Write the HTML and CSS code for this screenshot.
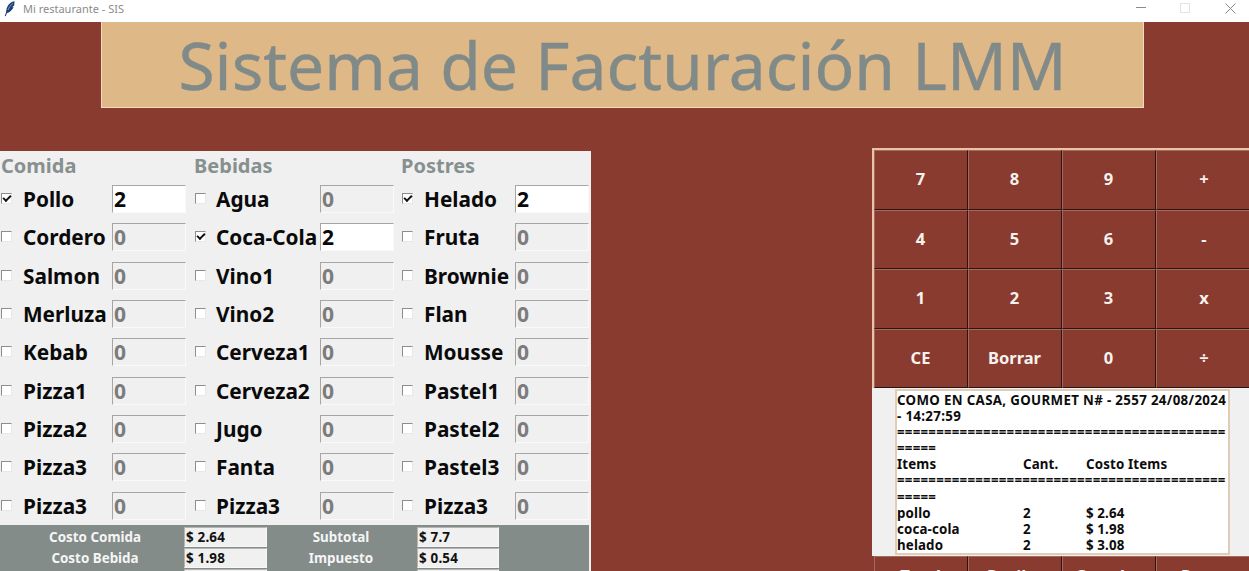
FILE: index.html
```html
<!DOCTYPE html>
<html lang="es">
<head>
<meta charset="utf-8">
<title>Mi restaurante - SIS</title>
<link rel="stylesheet" href="styles.css">
</head>
<body>
<header class="titlebar">
  <svg class="feather" viewBox="0 0 12 16" width="12" height="16"><path d="M10.500 .3C7 .8 3.500 3.500 2.400 8.500L2 11.500 .8 15 1.700 15.300 3 12C6 11.500 8.500 8.500 9.600 6L8 6.200 10.200 4.500Z" fill="#1c3f73"/><path d="M9 2.500C6.500 4 5 6.500 4 9" stroke="#7f9fca" fill="none"/></svg>
  <span class="app-name">Mi restaurante - SIS</span>
  <div class="win-controls">
    <svg width="149" height="22" viewBox="0 0 149 22"><path d="M36 7.500H46" stroke="#8a8a8a" fill="none"/><rect x="80.500" y="3.500" width="9" height="9" stroke="#e2e2e2" fill="none"/><path d="M125.500 3.500L135.500 13.500M135.500 3.500L125.500 13.500" stroke="#8a8a8a" fill="none"/></svg>
  </div>
</header>
<div class="banner">Sistema de Facturación LMM</div>
<main class="workspace">
  <section class="orders">
    <div class="columns">
      <div class="col col-food">
        <h2>Comida</h2>
        <div class="item"><span class="check on"></span><span class="name">Pollo</span><span class="qty active">2</span></div>
        <div class="item"><span class="check"></span><span class="name">Cordero</span><span class="qty">0</span></div>
        <div class="item"><span class="check"></span><span class="name">Salmon</span><span class="qty">0</span></div>
        <div class="item"><span class="check"></span><span class="name">Merluza</span><span class="qty">0</span></div>
        <div class="item"><span class="check"></span><span class="name">Kebab</span><span class="qty">0</span></div>
        <div class="item"><span class="check"></span><span class="name">Pizza1</span><span class="qty">0</span></div>
        <div class="item"><span class="check"></span><span class="name">Pizza2</span><span class="qty">0</span></div>
        <div class="item"><span class="check"></span><span class="name">Pizza3</span><span class="qty">0</span></div>
        <div class="item"><span class="check"></span><span class="name">Pizza3</span><span class="qty">0</span></div>
      </div>
      <div class="col col-drink">
        <h2>Bebidas</h2>
        <div class="item"><span class="check"></span><span class="name">Agua</span><span class="qty">0</span></div>
        <div class="item"><span class="check on"></span><span class="name">Coca-Cola</span><span class="qty active">2</span></div>
        <div class="item"><span class="check"></span><span class="name">Vino1</span><span class="qty">0</span></div>
        <div class="item"><span class="check"></span><span class="name">Vino2</span><span class="qty">0</span></div>
        <div class="item"><span class="check"></span><span class="name">Cerveza1</span><span class="qty">0</span></div>
        <div class="item"><span class="check"></span><span class="name">Cerveza2</span><span class="qty">0</span></div>
        <div class="item"><span class="check"></span><span class="name">Jugo</span><span class="qty">0</span></div>
        <div class="item"><span class="check"></span><span class="name">Fanta</span><span class="qty">0</span></div>
        <div class="item"><span class="check"></span><span class="name">Pizza3</span><span class="qty">0</span></div>
      </div>
      <div class="col col-dessert">
        <h2>Postres</h2>
        <div class="item"><span class="check on"></span><span class="name">Helado</span><span class="qty active">2</span></div>
        <div class="item"><span class="check"></span><span class="name">Fruta</span><span class="qty">0</span></div>
        <div class="item"><span class="check"></span><span class="name">Brownie</span><span class="qty">0</span></div>
        <div class="item"><span class="check"></span><span class="name">Flan</span><span class="qty">0</span></div>
        <div class="item"><span class="check"></span><span class="name">Mousse</span><span class="qty">0</span></div>
        <div class="item"><span class="check"></span><span class="name">Pastel1</span><span class="qty">0</span></div>
        <div class="item"><span class="check"></span><span class="name">Pastel2</span><span class="qty">0</span></div>
        <div class="item"><span class="check"></span><span class="name">Pastel3</span><span class="qty">0</span></div>
        <div class="item"><span class="check"></span><span class="name">Pizza3</span><span class="qty">0</span></div>
      </div>
    </div>
    <div class="costs">
      <span class="cost-label">Costo Comida</span><span class="cost-value">$ 2.64</span>
      <span class="cost-label">Subtotal</span><span class="cost-value">$ 7.7</span>
      <span class="cost-label">Costo Bebida</span><span class="cost-value">$ 1.98</span>
      <span class="cost-label">Impuesto</span><span class="cost-value">$ 0.54</span>
      <span class="cost-label"></span><span class="cost-value"></span>
      <span class="cost-label"></span><span class="cost-value"></span>
    </div>
  </section>
  <aside class="side">
    <div class="keypad">
      <button>7</button><button>8</button><button>9</button><button>+</button>
      <button>4</button><button>5</button><button>6</button><button>-</button>
      <button>1</button><button>2</button><button>3</button><button>x</button>
      <button>CE</button><button>Borrar</button><button>0</button><button>÷</button>
    </div>
    <div class="receipt-wrap">
      <div class="receipt">
        <p class="heading">COMO EN CASA, GOURMET N# - 2557 24/08/2024<br>- 14:27:59</p>
        <p class="rule">===============================================</p>
        <div class="line"><span>Items</span><span>Cant.</span><span>Costo Items</span></div>
        <p class="rule">===============================================</p>
        <div class="line"><span>pollo</span><span>2</span><span>$ 2.64</span></div>
        <div class="line"><span>coca-cola</span><span>2</span><span>$ 1.98</span></div>
        <div class="line"><span>helado</span><span>2</span><span>$ 3.08</span></div>
      </div>
    </div>
    <div class="keypad actions">
      <button>Total</button><button>Recibo</button><button>Guardar</button><button>Reset</button>
    </div>
  </aside>
</main>
</body>
</html>
```
FILE: styles.css
```css
* { box-sizing: border-box; }
html, body { margin: 0; height: 571px; overflow: hidden; }
body { background: #8a3b2f; font-family: "Noto Sans", "Open Sans", sans-serif; width: 1249px; }
.titlebar { height: 22px; background: #fff; display: flex; align-items: center; padding-left: 4px; }
.feather { display: block; margin-top: -5px; }
.app-name { font-size: 11px; color: #8b8b8b; margin-left: 7px; margin-top: -6px; }
.win-controls { margin-left: auto; height: 22px; }
.win-controls svg { display: block; }
.banner { margin-left: 101px; width: 1043px; height: 86px; background: #deb887; border: 1px solid #f0dcc0; border-top: 0; color: #808a88; font-size: 66px; line-height: 85px; text-align: center; white-space: nowrap; -webkit-text-stroke: .4px #808a88; }
.workspace { display: flex; justify-content: space-between; margin-top: 40px; align-items: flex-start; height: 423px; }
.orders { width: 591px; height: 420px; margin-top: 3px; background: #f0f0f0; display: flex; flex-direction: column; }
.columns { display: flex; height: 375px; }
.col { display: flex; flex-direction: column; flex: none; }
.col-food { width: 194px; }
.col-drink { width: 207px; }
.col-dessert { width: 188px; }
h2 { margin: 0; height: 29px; font-size: 20px; line-height: 30px; color: #87908f; font-weight: 700; padding-left: 1px; }
.col-drink h2 { padding-left: 0; }
.col-dessert h2 { padding-left: 0; }
.item { display: flex; align-items: center; height: 38.3px; }
.check { width: 11px; height: 11px; background: #fff; border: 1px solid; border-color: #8d8d8d #e8e8e8 #e8e8e8 #8d8d8d; flex: none; position: relative; margin-left: 1px; margin-top: -1px; }
.check.on::after { content: ""; position: absolute; left: 1px; top: 1px; width: 6px; height: 3px; border-left: 2px solid #111; border-bottom: 2px solid #111; transform: rotate(-45deg); }
.name { font-size: 20.800px; font-weight: 700; color: #0a0a0a; margin-left: 11px; flex: 1; white-space: nowrap; line-height: 30px; }
.col-drink .name { margin-left: 10px; }
.qty { width: 74px; height: 28px; margin-right: 7px; border: 1px solid; border-color: #a6a6a6 #fafafa #fafafa #a6a6a6; background: #f0f0f0; color: #7c7c7c; font-size: 21px; font-weight: 700; line-height: 26px; padding-left: 1px; flex: none; }
.col-food .qty { margin-right: 8px; }
.qty.active { background: #fff; color: #0a0a0a; }
.col-dessert .qty { margin-right: 0; }
.costs { width: 589px; flex: 1; background: #848c8a; display: grid; grid-template-columns: 184px 83px 150px 82px; grid-auto-rows: 20px; align-content: start; padding-top: 2px; row-gap: 1px; align-items: center; }
.cost-label { color: #f5f5f5; font-size: 13.400px; font-weight: 700; text-align: center; padding-left: 6px; line-height: 20px; }
.cost-label:nth-child(4n+3) { padding-left: 0; padding-right: 2px; }
.cost-value { height: 20px; background: #f0f0f0; border: 1px solid; border-color: #b5b5b5 #f8f8f8 #f8f8f8 #b5b5b5; color: #111; font-size: 13.400px; letter-spacing: .2px; font-weight: 700; line-height: 18px; padding-left: 1px; }
.side { width: 377px; }
.keypad { display: grid; grid-template-columns: 94px 94px 94px 97px; grid-auto-rows: 59.500px; border-top: 2px solid #e8c3a8; border-left: 2px solid #e8c3a8; }
.keypad button { background: #8a3b2f; color: #f7f2ee; border: 1px solid; border-color: #a56a5e #2a1512 #2a1512 #a56a5e; font: 700 16.500px "Noto Sans", sans-serif; padding: 0 1px 2px 0; }
.receipt-wrap { height: 168px; background: #f0f0f0; padding: 1px 0 0 23px; }
.receipt { width: 335px; height: 166px; background: #fff; border: 2px solid #e0cdb8; padding: 1px 0 0; font-size: 13.300px; letter-spacing: .15px; font-weight: 700; line-height: 16.100px; color: #0c0c0c; overflow: hidden; }
.receipt p { margin: 0; }
.receipt .heading { letter-spacing: .34px; }
.receipt .rule { word-break: break-all; letter-spacing: .22px; }
.line { display: grid; grid-template-columns: 126px 63px 1fr; }
.actions { border-top: 0; border-left-color: #8a3b2f; grid-auto-rows: 40px; }
```
